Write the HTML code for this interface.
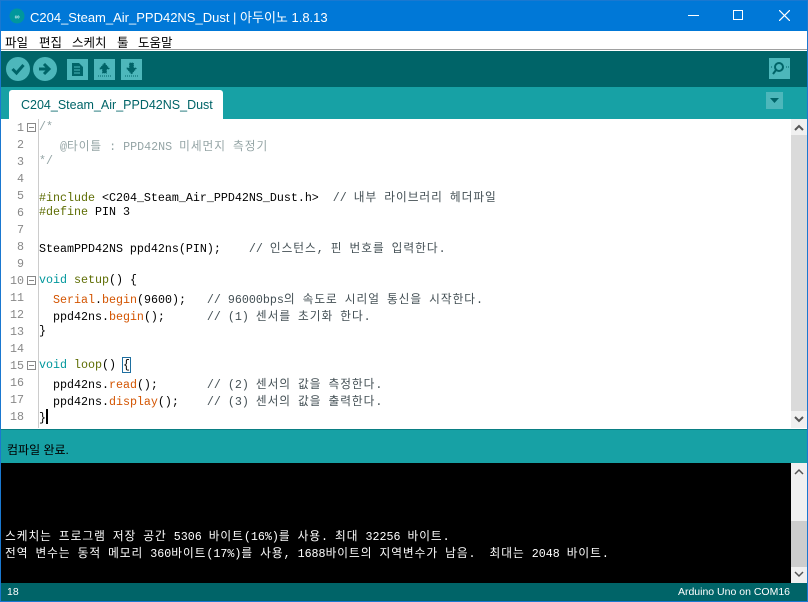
<!DOCTYPE html>
<html><head><meta charset="utf-8"><style>
*{margin:0;padding:0;box-sizing:border-box}
body{width:808px;height:602px;overflow:hidden;background:#fff;font-family:"Liberation Sans","Noto Sans CJK KR",sans-serif;position:relative}
.win{position:absolute;left:0;top:0;width:808px;height:602px;border:1px solid #1a78d0}
#title{position:absolute;left:0;top:0;width:808px;height:31px;background:#0078d7;color:#fff;font-size:13px}
#title .t{position:absolute;left:30px;top:7px}
#menu{position:absolute;left:1px;top:31px;width:806px;height:19px;background:#fff;font-size:12.5px;border-bottom:1px solid #a0a0a0}
#menu span{position:absolute;top:1px}
#tool{position:absolute;left:1px;top:51px;width:806px;height:36px;background:#006468}
#tabs{position:absolute;left:1px;top:87px;width:806px;height:32px;background:#17a1a5}
.tab{position:absolute;left:8px;top:3px;width:214px;height:29px;background:#fff;border-radius:3px 3px 0 0;color:#006468;font-size:12.5px;padding:8px 0 0 12px}
#ed{position:absolute;left:1px;top:119px;width:806px;height:309px;background:#fff}
.ln{position:absolute;left:0;width:24px;text-align:right;color:#888;font:11.67px "Liberation Mono",monospace}
.cd{position:absolute;left:39px;white-space:pre;color:#000;font:11.67px "Liberation Mono","Noto Sans CJK KR",monospace}
.c1{color:#95a5a6}.c2{color:#434f54}.kw{color:#00979c}.fn{color:#5e6d03}.or{color:#d35400}
.k{letter-spacing:1px}
.fold{position:absolute;left:26px;width:9px;height:9px;border:1px solid #888}
.fold:after{content:"";position:absolute;left:1px;top:3px;width:5px;height:1px;background:#888}
#stat{position:absolute;left:1px;top:429px;width:806px;height:34px;background:#17a1a5;border-top:1px solid #0a7f84;font-size:12px;color:#000}
#con{position:absolute;left:1px;top:463px;width:806px;height:120px;background:#000;color:#fff;font:11.67px "Liberation Mono","Noto Sans CJK KR",monospace}
#bot{position:absolute;left:1px;top:583px;width:806px;height:18px;background:#006468;color:#fff;font-size:10.5px}
.sb{position:absolute;right:0;width:16px;background:#f0f0f0}
</style></head><body>
<div id="title">
<svg style="position:absolute;left:9px;top:8px" width="16" height="16"><circle cx="8" cy="8" r="7.5" fill="#00979c"/><text x="8" y="11" font-size="7" fill="#fff" text-anchor="middle" font-family="Liberation Sans">∞</text></svg>
<span class="t">C204_Steam_Air_PPD42NS_Dust | 아두이노 1.8.13</span>
<div style="position:absolute;left:688px;top:15px;width:11px;height:1px;background:#fff"></div>
<div style="position:absolute;left:733px;top:10px;width:10px;height:10px;border:1px solid #fff"></div>
<svg style="position:absolute;left:779px;top:10px" width="11" height="11"><path d="M0 0L11 11M11 0L0 11" stroke="#fff" stroke-width="1.2"/></svg>
</div>
<div id="menu"><span style="left:4px">파일</span><span style="left:38px">편집</span><span style="left:71px">스케치</span><span style="left:116px">툴</span><span style="left:137px">도움말</span></div>
<div id="tool">
<svg style="position:absolute;left:5px;top:6px" width="170" height="24">
<circle cx="12" cy="12" r="12" fill="#4db7bb"/><path d="M6.5 12l4 4 7-8" stroke="#006468" stroke-width="3" fill="none"/>
<circle cx="39" cy="12" r="12" fill="#4db7bb"/><path d="M33 12h10M38 7l5 5-5 5" stroke="#006468" stroke-width="3" fill="none"/>
<rect x="61" y="2" width="21" height="21" fill="#4db7bb"/><path d="M66 6h7l4 4v9h-11z" fill="#006468"/><path d="M68 10h6M68 13h6M68 16h6" stroke="#4db7bb" stroke-width="1"/>
<rect x="88" y="2" width="21" height="21" fill="#4db7bb"/><path d="M98.5 6l-5 6h3v4h4v-4h3z M92 19h13" fill="#006468" stroke="#006468" stroke-width="1" stroke-dasharray="1 1"/>
<rect x="115" y="2" width="21" height="21" fill="#4db7bb"/><path d="M125.5 17l-5-6h3v-5h4v5h3z M119 19h13" fill="#006468" stroke="#006468" stroke-width="1" stroke-dasharray="1 1"/>
</svg>
<div style="position:absolute;left:768px;top:7px;width:21px;height:21px;background:#4db7bb"><svg width="21" height="21"><circle cx="10" cy="9" r="4" stroke="#006468" stroke-width="2" fill="none"/><path d="M7 12l-3 4" stroke="#006468" stroke-width="2"/><path d="M2 9h1M17 9h1M19 9h1" stroke="#006468"/></svg></div>
</div>
<div id="tabs"><div class="tab">C204_Steam_Air_PPD42NS_Dust</div>
<div style="position:absolute;left:765px;top:5px;width:17px;height:17px;background:#4db7bb"><svg width="17" height="17"><path d="M4 6h9l-4.5 5z" fill="#006468"/></svg></div></div>
<div id="ed">
<div style="position:absolute;left:37px;top:0;width:1px;height:309px;background:#ccc"></div>
<div class="sb" style="top:0;height:309px"><svg width="16" height="16" style="position:absolute;top:1px"><path d="M4 10l4-4 4 4" stroke="#555" stroke-width="2" fill="none"/></svg><div style="position:absolute;top:16px;left:0;width:16px;height:276px;background:#dadada"></div><svg width="16" height="16" style="position:absolute;bottom:1px"><path d="M4 6l4 4 4-4" stroke="#555" stroke-width="2" fill="none"/></svg></div>
<div class="fold" style="top:4px"></div><div class="fold" style="top:157px"></div><div class="fold" style="top:242px"></div>
</div>
<div id="lines"></div>
<div id="stat"><span style="position:absolute;left:6px;top:11px">컴파일 완료.</span></div>
<div id="con">
<div class="sb" style="top:0;height:120px;background:#f0f0f0"><svg width="16" height="16" style="position:absolute;top:1px"><path d="M4 10l4-4 4 4" stroke="#555" stroke-width="1.5" fill="none"/></svg><div style="position:absolute;top:58px;width:16px;height:46px;background:#cdcdcd"></div><svg width="16" height="16" style="position:absolute;bottom:1px"><path d="M4 6l4 4 4-4" stroke="#555" stroke-width="1.5" fill="none"/></svg></div>
<div class="kk" style="position:absolute;left:4px;top:64px;white-space:pre">스케치는 프로그램 저장 공간 5306 바이트(16%)를 사용. 최대 32256 바이트.</div>
<div class="kk" style="position:absolute;left:4px;top:81px;white-space:pre">전역 변수는 동적 메모리 360바이트(17%)를 사용, 1688바이트의 지역변수가 남음.  최대는 2048 바이트.</div>
</div>
<div id="bot"><span style="position:absolute;left:6px;top:3px">18</span><span style="position:absolute;right:17px;top:3px">Arduino Uno on COM16</span></div>
<div class="win"></div>
<script>
var L=[
'<span class="c1">/*</span>',
'<span class="c1">   @타이틀 : PPD42NS 미세먼지 측정기</span>',
'<span class="c1">*/</span>',
'',
'<span class="fn">#include</span> &lt;C204_Steam_Air_PPD42NS_Dust.h&gt;  <span class="c2">// 내부 라이브러리 헤더파일</span>',
'<span class="fn">#define</span> PIN 3',
'',
'SteamPPD42NS ppd42ns(PIN);    <span class="c2">// 인스턴스, 핀 번호를 입력한다.</span>',
'',
'<span class="kw">void</span> <span class="fn">setup</span>() {',
'  <span class="or">Serial</span>.<span class="or">begin</span>(9600);   <span class="c2">// 96000bps의 속도로 시리얼 통신을 시작한다.</span>',
'  ppd42ns.<span class="or">begin</span>();      <span class="c2">// (1) 센서를 초기화 한다.</span>',
'}',
'',
'<span class="kw">void</span> <span class="fn">loop</span>() <span style="outline:1px solid #1e6fa0">{</span>',
'  ppd42ns.<span class="or">read</span>();       <span class="c2">// (2) 센서의 값을 측정한다.</span>',
'  ppd42ns.<span class="or">display</span>();    <span class="c2">// (3) 센서의 값을 출력한다.</span>',
'}<span style="display:inline-block;width:2px;height:15px;background:#000;vertical-align:-3px"></span>'];
function K(s){return s.replace(/([\uAC00-\uD7A3]+)/g,'<span class="k">$1</span>');}
var h='';for(var i=0;i<L.length;i++){var t=120+i*17;h+='<div class="ln" style="top:'+(t+1)+'px">'+(i+1)+'</div><div class="cd" style="top:'+t+'px">'+K(L[i])+'</div>';}
document.getElementById('lines').innerHTML=h;
document.querySelectorAll('.kk').forEach(function(e){e.innerHTML=K(e.innerHTML);});
</script>
</body></html>
